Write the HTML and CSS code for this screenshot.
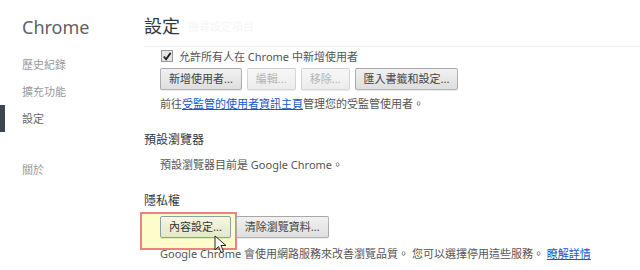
FILE: index.html
```html
<!DOCTYPE html>
<html lang="zh-Hant">
<head>
    <meta charset="UTF-8">
    <title>設定</title>
    <link rel="stylesheet" href="styles.css">
</head>
<body class="page">
    <!-- 左側選單 -->
    <div class="side">
        <div class="side-title">Chrome</div>
        <div class="side-item">歷史紀錄</div>
        <div class="side-item">擴充功能</div>
        <div class="side-item side-item-on">設定</div>
        <div class="side-item side-item-about">關於</div>
    </div>

    <div class="main">
        <div class="main-header">
            <span class="main-title">設定</span>
            <span class="main-search">搜尋設定項目</span>
        </div>

        <div class="main-content">
            <div class="check-row">
                <span class="check-box">
                    <svg width="11" height="11" viewBox="0 0 11 11"><path d="M2 5.5 L4.5 8.5 L9.5 1.5" fill="none" stroke="#222" stroke-width="2"/></svg>
                </span>
                允許所有人在 Chrome 中新增使用者
            </div>
            <div class="btn-row btn-row-users">
                <span class="btn">新增使用者...</span>
                <span class="btn btn-off">編輯...</span>
                <span class="btn btn-off">移除...</span>
                <span class="btn">匯入書籤和設定...</span>
            </div>
            <div class="text-row">前往<a class="link">受監管的使用者資訊主頁</a>管理您的受監管使用者。</div>

            <div class="section-title">預設瀏覽器</div>
            <div class="text-row text-row-default">預設瀏覽器目前是 Google Chrome。</div>

            <div class="section-title">隱私權</div>
            <div class="btn-row btn-row-privacy">
                <div class="mark"></div>
                <span class="btn btn-hover">內容設定...</span>
                <span class="btn">清除瀏覽資料...</span>
                <svg class="cursor" width="14" height="20" viewBox="0 0 14 20">
                    <path d="M1 1 L1 15 L4.5 11.5 L7 17.5 L9.5 16.5 L7 10.5 L12 10.5 Z" fill="#fff" stroke="#222" stroke-width="1"/>
                </svg>
            </div>
            <div class="text-row text-row-last">Google Chrome 會使用網路服務來改善瀏覽品質。 您可以選擇停用這些服務。 <a class="link">瞭解詳情</a></div>
        </div>
    </div>
</body>
</html>
```

FILE: styles.css
```css
.page {
    margin: 0;
    padding: 0;
    display: flex;
    width: 640px;
    height: 270px;
    overflow: hidden;
    background-color: white;
    font-family: "Noto Sans", "Noto Sans CJK TC", sans-serif;
    font-size: 11px;
    color: #555;
}
.side {
    width: 144px;
    flex-shrink: 0;
}
.side-title {
    padding: 14px 0 0 22px;
    height: 37px;
    line-height: 26px;
    font-size: 18px;
    color: #5c6166;
}
.side-item {
    position: relative;
    height: 27px;
    line-height: 27px;
    padding-left: 22px;
    color: #999;
}
.side-item-on {
    color: #666;
}
.side-item-on::before {
    content: "";
    position: absolute;
    left: 0;
    top: 0;
    width: 5px;
    height: 27px;
    background-color: #3c4650;
}
.side-item-about {
    margin-top: 24px;
}
.main {
    flex: 1;
}
.main-header {
    display: flex;
    align-items: center;
    gap: 8px;
    height: 47px;
    border-bottom: 1px solid #eee;
    box-sizing: border-box;
}
.main-title {
    font-size: 18px;
    color: #303942;
    line-height: 26px;
    margin-top: 5px;
}
.main-search {
    color: #f6f6f6;
    margin-top: 6px;
}
.main-content {
    padding-left: 16px;
}
.check-row {
    display: flex;
    align-items: center;
    gap: 6px;
    height: 18px;
    padding-left: 1px;
}
.check-box {
    display: flex;
    align-items: center;
    justify-content: center;
    width: 10px;
    height: 10px;
    border: 1px solid #999;
    background-color: #e6e6e6;
}
.btn-row {
    position: relative;
    display: flex;
    gap: 5px;
}
.btn-row-users {
    margin-top: 3px;
}
.btn-row-privacy {
    margin-top: 5px;
}
.btn {
    position: relative;
    height: 20px;
    line-height: 20px;
    padding: 0 8px;
    border: 1px solid rgba(0, 0, 0, 0.25);
    border-radius: 2px;
    background: linear-gradient(#f1f1f1, #dedede);
    color: #444;
    box-shadow: 0 1px 0 rgba(0, 0, 0, 0.08);
}
.btn-off {
    color: #b5b5b5;
    border-color: rgba(0, 0, 0, 0.12);
    background: linear-gradient(#f7f7f7, #ececec);
}
.btn-hover {
    border-color: #8aa0a8;
    background: linear-gradient(#f6f6e2, #e4e8c8);
    color: #333;
}
.mark {
    position: absolute;
    left: -20px;
    top: -4px;
    width: 93px;
    height: 34px;
    border: 2px solid #ef8080;
    background-color: #fdfcca;
}
.cursor {
    position: absolute;
    left: 54px;
    top: 19px;
}
.text-row {
    height: 18px;
    line-height: 18px;
    margin-top: 5px;
}
.text-row-default {
    margin-top: 6px;
}
.text-row-last {
    margin-top: 7px;
}
.link {
    color: #1558cc;
    text-decoration: underline;
}
.section-title {
    height: 20px;
    line-height: 20px;
    margin: 17px 0 0 -16px;
    font-size: 12px;
    color: #303942;
}
```
